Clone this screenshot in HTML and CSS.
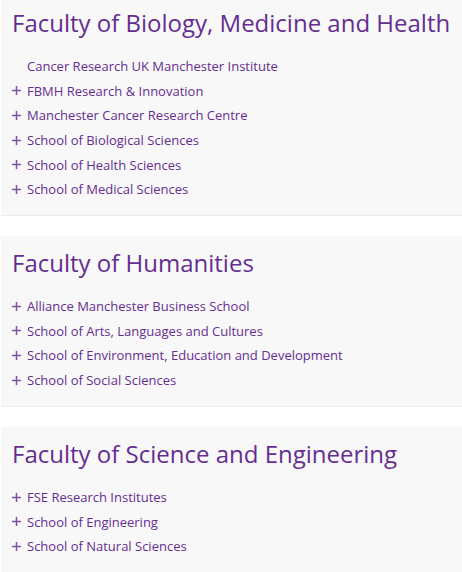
FILE: index.html
```html
<!DOCTYPE html>
<html lang="en">
<head>
  <meta charset="UTF-8">
  <meta name="viewport" content="width=device-width, initial-scale=1.0">
  <title>Faculties and Schools</title>
  <link rel="stylesheet" href="styles.css">
</head>
<body>
  <div class="faculties">
    <div class="faculty">
      <h2 class="faculty-title">Faculty of Biology, Medicine and Health</h2>
      <ul class="units">
        <li class="unit no-children"><a href="#">Cancer Research UK Manchester Institute</a></li>
        <li class="unit"><svg class="plus" viewBox="0 0 9 9"><path d="M0 4.5H9M4.5 0V9"/></svg><a href="#">FBMH Research &amp; Innovation</a></li>
        <li class="unit"><svg class="plus" viewBox="0 0 9 9"><path d="M0 4.5H9M4.5 0V9"/></svg><a href="#">Manchester Cancer Research Centre</a></li>
        <li class="unit"><svg class="plus" viewBox="0 0 9 9"><path d="M0 4.5H9M4.5 0V9"/></svg><a href="#">School of Biological Sciences</a></li>
        <li class="unit"><svg class="plus" viewBox="0 0 9 9"><path d="M0 4.5H9M4.5 0V9"/></svg><a href="#">School of Health Sciences</a></li>
        <li class="unit"><svg class="plus" viewBox="0 0 9 9"><path d="M0 4.5H9M4.5 0V9"/></svg><a href="#">School of Medical Sciences</a></li>
      </ul>
    </div>

    <div class="faculty">
      <h2 class="faculty-title">Faculty of Humanities</h2>
      <ul class="units">
        <li class="unit"><svg class="plus" viewBox="0 0 9 9"><path d="M0 4.5H9M4.5 0V9"/></svg><a href="#">Alliance Manchester Business School</a></li>
        <li class="unit"><svg class="plus" viewBox="0 0 9 9"><path d="M0 4.5H9M4.5 0V9"/></svg><a href="#">School of Arts, Languages and Cultures</a></li>
        <li class="unit"><svg class="plus" viewBox="0 0 9 9"><path d="M0 4.5H9M4.5 0V9"/></svg><a href="#">School of Environment, Education and Development</a></li>
        <li class="unit"><svg class="plus" viewBox="0 0 9 9"><path d="M0 4.5H9M4.5 0V9"/></svg><a href="#">School of Social Sciences</a></li>
      </ul>
    </div>

    <div class="faculty">
      <h2 class="faculty-title">Faculty of Science and Engineering</h2>
      <ul class="units">
        <li class="unit"><svg class="plus" viewBox="0 0 9 9"><path d="M0 4.5H9M4.5 0V9"/></svg><a href="#">FSE Research Institutes</a></li>
        <li class="unit"><svg class="plus" viewBox="0 0 9 9"><path d="M0 4.5H9M4.5 0V9"/></svg><a href="#">School of Engineering</a></li>
        <li class="unit"><svg class="plus" viewBox="0 0 9 9"><path d="M0 4.5H9M4.5 0V9"/></svg><a href="#">School of Natural Sciences</a></li>
      </ul>
    </div>
  </div>
</body>
</html>
```

FILE: styles.css
```css
body {
  margin: 0;
  padding: 0;
  background: #ffffff;
  font-family: "Open Sans", "Liberation Sans", sans-serif;
  overflow: hidden;
}
.faculties {
  margin-top: -4px; /* first card is cut off at the top */
  margin-left: 1px;
}
.faculty {
  background: #f8f8f8;
  border-bottom: 1px solid #ebebeb;
  margin-bottom: 20px;
  padding: 11px 0 13.4px 11px;
}
.faculty-title {
  margin: 0;
  font-size: 24px;
  font-weight: 400;
  line-height: 32px;
  color: #662d91;
}
.units {
  list-style: none;
  margin: 15px 0 0;
  padding: 0;
}
.unit {
  display: flex;
  align-items: center;
  height: 24.6px;
  font-size: 13px;
}
.unit a {
  color: #662d91;
  text-decoration: none;
}
.no-children {
  padding-left: 15px;
}
.plus {
  flex: none;
  width: 9px;
  height: 9px;
  margin-right: 6px;
  fill: none;
  stroke: #7f52a0;
  stroke-width: 1.5;
}
```
